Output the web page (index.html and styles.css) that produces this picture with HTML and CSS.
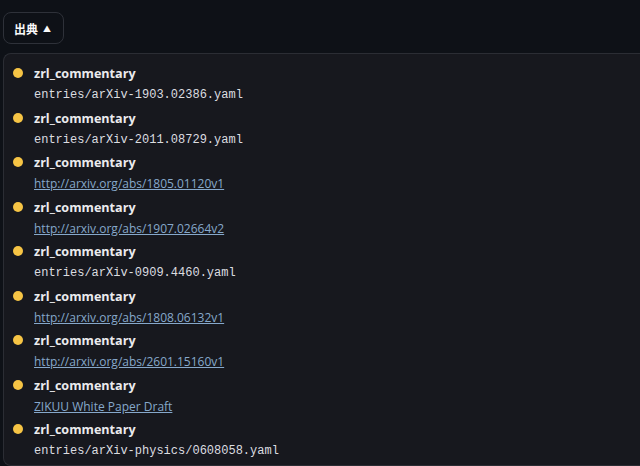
FILE: index.html
```html
<!DOCTYPE html>
<html>
<head>
<meta charset="utf-8">
<link rel="stylesheet" href="styles.css">
</head>
<body>
<div class="page">
  <button class="toggle">出典 <span class="caret">▲</span></button>
  <div class="panel">
    <div class="item"><span class="dot"></span><div class="body"><div class="title">zrl_commentary</div><div class="mono">entries/arXiv-1903.02386.yaml</div></div></div>
    <div class="item"><span class="dot"></span><div class="body"><div class="title">zrl_commentary</div><div class="mono">entries/arXiv-2011.08729.yaml</div></div></div>
    <div class="item"><span class="dot"></span><div class="body"><div class="title">zrl_commentary</div><a class="link" href="#">http://arxiv.org/abs/1805.01120v1</a></div></div>
    <div class="item"><span class="dot"></span><div class="body"><div class="title">zrl_commentary</div><a class="link" href="#">http://arxiv.org/abs/1907.02664v2</a></div></div>
    <div class="item"><span class="dot"></span><div class="body"><div class="title">zrl_commentary</div><div class="mono">entries/arXiv-0909.4460.yaml</div></div></div>
    <div class="item"><span class="dot"></span><div class="body"><div class="title">zrl_commentary</div><a class="link" href="#">http://arxiv.org/abs/1808.06132v1</a></div></div>
    <div class="item"><span class="dot"></span><div class="body"><div class="title">zrl_commentary</div><a class="link" href="#">http://arxiv.org/abs/2601.15160v1</a></div></div>
    <div class="item"><span class="dot"></span><div class="body"><div class="title">zrl_commentary</div><a class="link" href="#">ZIKUU White Paper Draft</a></div></div>
    <div class="item"><span class="dot"></span><div class="body"><div class="title">zrl_commentary</div><div class="mono">entries/arXiv-physics/0608058.yaml</div></div></div>
  </div>
</div>
</body>
</html>
```

FILE: styles.css
```css
html, body {
  margin: 0;
  padding: 0;
  background: #0e1117;
  color: #fafafa;
  font-family: "Open Sans", "Noto Sans CJK JP", sans-serif;
  overflow: hidden;
}
.page {
  padding: 12px 0 0 3px;
}
.toggle {
  display: flex;
  align-items: center;
  gap: 5px;
  height: 32px;
  width: 61px;
  padding: 0 0 0 10px;
  box-sizing: border-box;
  background: #0e1117;
  border: 1px solid #2e3139;
  border-radius: 8px;
  color: #fafafa;
  font-family: "Noto Sans CJK JP", sans-serif;
  font-weight: 700;
  font-size: 12px;
}
.caret {
  font-size: 8px;
}
.panel {
  margin-top: 9px;
  background: #17181e;
  border: 1px solid #2b2d34;
  border-right: none;
  border-radius: 8px 0 0 8px;
  padding: 10px 0 4px 9px;
  display: flex;
  flex-direction: column;
  gap: 3.5px;
}
.item {
  display: flex;
  align-items: flex-start;
  gap: 11px;
}
.dot {
  width: 10px;
  height: 10px;
  border-radius: 50%;
  background: #f6c445;
  margin-top: 4px;
  flex: none;
}
.title {
  font-weight: 700;
  font-size: 12.6px;
  line-height: 20px;
  color: #ebebee;
}
.mono {
  font-family: "Liberation Mono", monospace;
  font-size: 12px;
  line-height: 20px;
  padding-top: 1px;
  color: #dcdde0;
}
.link {
  display: block;
  font-size: 12px;
  line-height: 20px;
  padding-top: 1px;
  color: #86a8cb;
  text-decoration: underline;
}
```
